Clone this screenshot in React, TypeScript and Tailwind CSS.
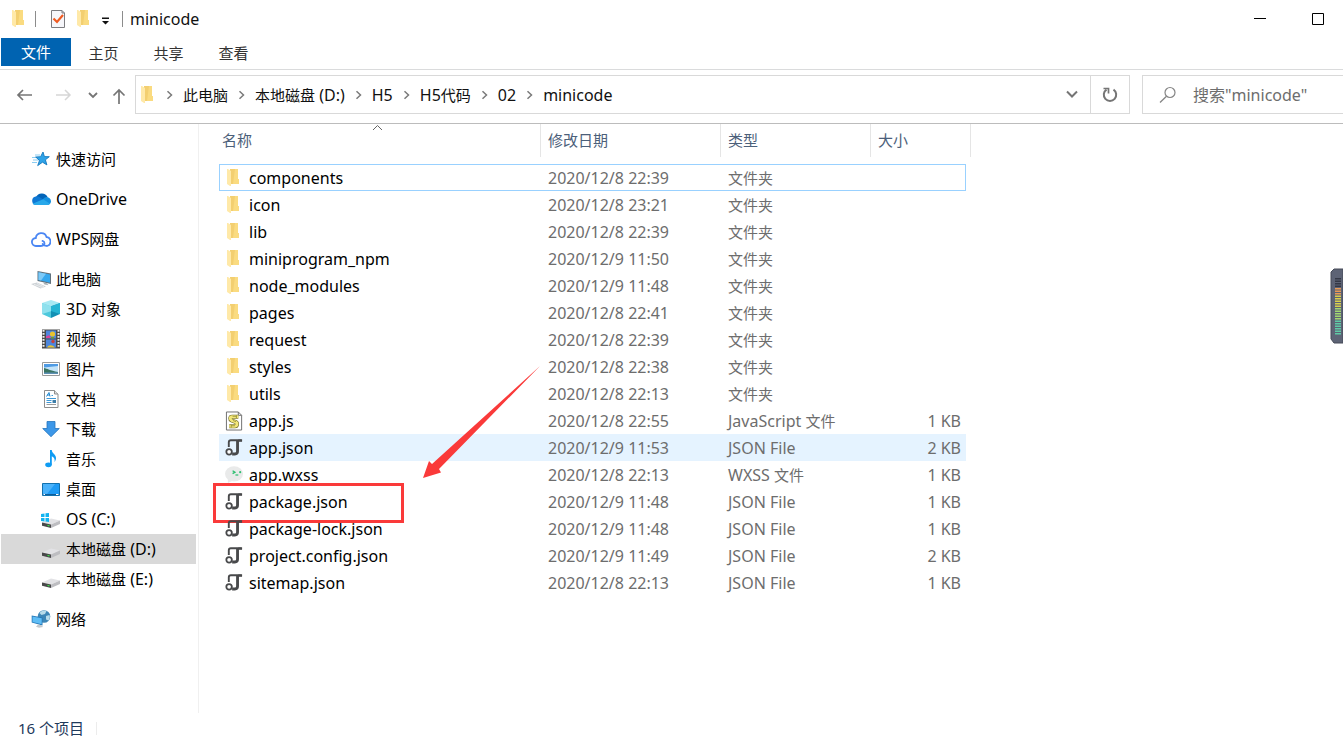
import type { ReactNode } from "react"

const tree = [
  { name: "快速访问", icon: "star", level: 0 },
  { name: "OneDrive", icon: "onedrive", level: 0 },
  { name: "WPS网盘", icon: "wps", level: 0 },
  { name: "此电脑", icon: "pc", level: 0 },
  { name: "3D 对象", icon: "cube", level: 1 },
  { name: "视频", icon: "video", level: 1 },
  { name: "图片", icon: "picture", level: 1 },
  { name: "文档", icon: "document", level: 1 },
  { name: "下载", icon: "download", level: 1 },
  { name: "音乐", icon: "music", level: 1 },
  { name: "桌面", icon: "desktop", level: 1 },
  { name: "OS (C:)", icon: "osdrive", level: 1 },
  { name: "本地磁盘 (D:)", icon: "drive", level: 1, selected: true },
  { name: "本地磁盘 (E:)", icon: "drive", level: 1 },
  { name: "网络", icon: "network", level: 0 },
]

const files = [
  { name: "components", date: "2020/12/8 22:39", type: "文件夹", size: "", icon: "folder", state: "focused" },
  { name: "icon", date: "2020/12/8 23:21", type: "文件夹", size: "", icon: "folder" },
  { name: "lib", date: "2020/12/8 22:39", type: "文件夹", size: "", icon: "folder" },
  { name: "miniprogram_npm", date: "2020/12/9 11:50", type: "文件夹", size: "", icon: "folder" },
  { name: "node_modules", date: "2020/12/9 11:48", type: "文件夹", size: "", icon: "folder" },
  { name: "pages", date: "2020/12/8 22:41", type: "文件夹", size: "", icon: "folder" },
  { name: "request", date: "2020/12/8 22:39", type: "文件夹", size: "", icon: "folder" },
  { name: "styles", date: "2020/12/8 22:38", type: "文件夹", size: "", icon: "folder" },
  { name: "utils", date: "2020/12/8 22:13", type: "文件夹", size: "", icon: "folder" },
  { name: "app.js", date: "2020/12/8 22:55", type: "JavaScript 文件", size: "1 KB", icon: "js" },
  { name: "app.json", date: "2020/12/9 11:53", type: "JSON File", size: "2 KB", icon: "json", state: "hover" },
  { name: "app.wxss", date: "2020/12/8 22:13", type: "WXSS 文件", size: "1 KB", icon: "wxss" },
  { name: "package.json", date: "2020/12/9 11:48", type: "JSON File", size: "1 KB", icon: "json", marked: true },
  { name: "package-lock.json", date: "2020/12/9 11:48", type: "JSON File", size: "1 KB", icon: "json" },
  { name: "project.config.json", date: "2020/12/9 11:49", type: "JSON File", size: "2 KB", icon: "json" },
  { name: "sitemap.json", date: "2020/12/8 22:13", type: "JSON File", size: "1 KB", icon: "json" },
]

const path = ["此电脑", "本地磁盘 (D:)", "H5", "H5代码", "02", "minicode"]

// Chinese runs are set one pixel smaller than the Latin text around them
function Label({ text }: { text: string }) {
  return (
    <span className="whitespace-pre">
      {text.split(/([\u4e00-\u9fff]+)/).map((part, i) =>
        i % 2 ? (
          <span key={i} className="text-[15px]">
            {part}
          </span>
        ) : (
          part
        ),
      )}
    </span>
  )
}

function FolderIcon() {
  return (
    <svg width="14" height="18" viewBox="0 0 14 18" aria-hidden="true">
      <path d="M4 0h8v10h1v5H4z" fill="#fadb80" />
      <path d="M4 0h5L7 15H4z" fill="#f3cf70" />
      <path d="M1 0h1l3 2v15H4L1 15z" fill="#ffe9a8" />
    </svg>
  )
}

const disk = (
  <>
    <path d="M1 13.500 10 9.500 19 11.500 10 15.500z" fill="#e2e2e5" />
    <path d="M10 15.500 19 11.500V15L10 19z" fill="#bdbdc1" />
    <path d="M1 13.500 10 15.500V19L1 16.800z" fill="#48484a" />
    <path d="M6.500 16.400l2 .5" stroke="#3ddc4a" strokeWidth="1.200" />
  </>
)

const treeIcons: Record<string, ReactNode> = {
  star: (
    <>
      <path d="M4 6h5M1 8.500h6M2 11h6M1 13.500h5" stroke="#8ccdf2" strokeWidth="1" />
      <path d="M12 3l1.400 4.600 4.900.1-3.900 3.100 1.500 5.100-4.400-2.700-4.800 3.400 1.800-5.200L4.700 8l4.900-.3z" fill="#2ea3e8" stroke="#1478bd" strokeWidth=".9" />
    </>
  ),
  onedrive: (
    <>
      <path d="M5 8.500A6.300 6.300 0 0 1 16.600 8L10 12z" fill="#0364b8" />
      <path d="M4.500 16A4.400 4.400 0 0 1 4.800 7.400c1.200-.2 2.500.1 3.500.7L14 11.500 7 16z" fill="#0f78d4" />
      <path d="M12 10.300C13 8.700 14.500 8 16.200 8c1.400.2 3.800 1.700 3.800 4.200 0 2.300-1.700 3.800-3.900 3.800H9z" fill="#1490df" />
      <path d="M1.600 14.800 12.200 10.200 19 14.800c-.8.9-1.800 1.200-2.900 1.200H4.500c-1.200 0-2.200-.4-2.900-1.200z" fill="#28a8ea" />
    </>
  ),
  wps: (
    <g fill="none" stroke="#4a86f3" strokeWidth="1.800" strokeLinecap="round">
      <path d="M9 17H5A4 4 0 0 1 4.800 9 5.500 5.500 0 0 1 15.500 8a4.600 4.600 0 0 1 .6 9c-2.300 0-3.400-.5-4.400-2" />
      <path d="M8.500 17c3 .2 5-1 5-2.800 0-1.400-.9-2-2-2.300" />
    </g>
  ),
  pc: (
    <>
      <path d="M6.500 2 20 4.500V15L6.500 12z" fill="#61717d" />
      <path d="M7.500 3.200 19 5.500v8.200L7.500 11z" fill="#35a7ee" />
      <path d="M7.500 3.200 15 4.700 10 11.500 7.500 11z" fill="#7cc9f7" />
      <path d="M12 13.500l4 .8 1.500 2-4-.8z" fill="#a8b0b6" />
      <path d="M0 15 6 13.500 15 17.500 9.500 19.500z" fill="#cdd2d6" />
      <path d="M3 15.300 11.500 18.500M6 14.500l7 3.300" stroke="#f4f5f6" strokeWidth=".7" />
    </>
  ),
  cube: (
    <>
      <path d="M1 4 10 1l9 3-9 3.200z" fill="#a7e9f3" />
      <path d="M1 4l9 3.200V19l-9-4z" fill="#4cc8dc" />
      <path d="M19 4l-9 3.200V19l9-4z" fill="#1390b4" />
      <path d="M1 4l9 3.200v5L1 15z" fill="#8fe1ee" />
      <path d="M19 4v11l-9-3V7.200z" fill="#24b4d3" />
    </>
  ),
  video: (
    <>
      <path d="M1 .5h18v19H1z" fill="#4a4a4a" />
      <path d="M2.500 1v18M17.500 1v18" stroke="#efefef" strokeWidth="2" strokeDasharray="1.800 1.200" />
      <path d="M5 1.500h10v8H5zM5 10.500h10v8H5z" fill="#4d86dc" />
      <circle cx="11.500" cy="5" r="2.600" fill="#e9c22e" />
      <path d="M5 7.500l3-1.500 2 3H5z" fill="#d9419c" />
      <path d="M10 8h3v1.500h-3z" fill="#6b9a35" />
      <circle cx="12" cy="12.500" r="1.700" fill="#c8413e" />
      <path d="M6 18.500c2-3 5-3 8 0z" fill="#e9c22e" />
    </>
  ),
  picture: (
    <>
      <path d="M1.500 3.500h17v13h-17z" fill="#fff" stroke="#9a9a9a" />
      <path d="M3 5h14v10H3z" fill="#c3e3f8" />
      <path d="M3 5h14v2L3 8.500z" fill="#4f9be4" />
      <path d="M3 9c3 .5 6 2.500 14 4V15H3z" fill="#3a7462" />
      <path d="M3 13.500h14V15H3z" fill="#5e90b5" />
    </>
  ),
  document: (
    <>
      <path d="M3.500 1.500h10l3.500 3.500v13.500H3.500z" fill="#fff" stroke="#8d8d8d" />
      <path d="M13.500 1.500V5H17" fill="#ddd" stroke="#8d8d8d" />
      <path d="M5.500 7.500 8 3.500l1 4M6 6h3" fill="none" stroke="#1e88d2" />
      <path d="M10.500 6.500H12M5.500 9.500h9.500M5.500 11.500h5M5.500 13.500h5" stroke="#3d97d6" />
      <path d="M5.500 15.500H15" stroke="#9a9a9a" />
      <path d="M11.500 11h3.500v3h-3.500z" fill="#3c7da8" />
    </>
  ),
  download: <path d="M6 2.500h8v7h4.300L10 17.700 1.700 9.500H6z" fill="#3c97e8" stroke="#2373bd" strokeWidth=".8" />,
  music: (
    <>
      <ellipse cx="7.500" cy="15.800" rx="3.300" ry="2.400" fill="#0f9cf3" />
      <path d="M9 1h1.800c0 3.500 4.700 4.500 4.200 8.500-.1 1.300-.7 2.500-1.500 3.500.6-3-.3-4.800-2.700-5.800v8.600H9z" fill="#0f9cf3" />
    </>
  ),
  desktop: (
    <>
      <path d="M1.500 4.500h17v12h-17z" fill="#1f9bf5" stroke="#1271ae" />
      <path d="M2 5h12L6 15H2z" fill="#4bb2fa" />
      <path d="M2 15.500h16" stroke="#0f5c98" />
      <path d="M2.500 15.500h1.500M15 15.500h2.500" stroke="#fff" />
    </>
  ),
  osdrive: (
    <>
      {disk}
      <path d="M0 5l3.500-.5v3.500H0zM4.500 4.300 8 4v4H4.500zM0 9h3.500v3.500L0 12zM4.500 9H8v4l-3.500-.4z" fill="#12b4f0" />
    </>
  ),
  drive: disk,
  network: (
    <>
      <circle cx="13" cy="7.500" r="6.300" fill="#3d86b6" />
      <path d="M8.500 4c1.500-2.500 4.500-3.200 7-2.100L14 5l-3.500 1zM15 7l3.500-1c.7 2 .3 4-1 5.500l-2.500-1z" fill="#b8dcea" />
      <path d="M.7 6.500 11.500 8.500v8L.7 13.500z" fill="#2578b8" />
      <path d="M1.500 7.500 10.700 9.300v6L1.500 12.900z" fill="#5fbdf5" />
      <path d="M7 15.500l3.500.8 1.500 1.700-4 .7-3-1z" fill="#c3c9cd" />
    </>
  ),
}

const fileIcons: Record<string, ReactNode> = {
  js: (
    <svg width="20" height="20" viewBox="0 0 20 20" aria-hidden="true">
      <path d="M1.500.5h12.500l3.500 3.500v15.500h-16z" fill="#fff" stroke="#6c6c6c" />
      <path d="M14 .5V4h3.500" fill="none" stroke="#6c6c6c" />
      <path d="M14 5.500H7.500c-2.500 0-2.500 3-.5 4l4 1.500c2.500 1 2 4.500-.5 4.500H4.500" fill="none" stroke="#6e6828" strokeWidth="4.200" />
      <path d="M14 5.500H7.500c-2.500 0-2.500 3-.5 4l4 1.500c2.500 1 2 4.500-.5 4.500H4.500" fill="none" stroke="#f2e779" strokeWidth="3" />
      <path d="M8 5h4M8.500 9.500l3 1.200M6.500 15h4M12 4v3M6.500 14v3" stroke="#8a822c" strokeWidth=".8" />
    </svg>
  ),
  json: (
    <svg width="20" height="20" viewBox="0 0 20 20" aria-hidden="true">
      <path d="M4 9V4c0-1.700.7-2.200 2.200-2.200H18" fill="none" stroke="#48494b" strokeWidth="2" />
      <path d="M13.200 2v11.500c0 2-.9 2.800-2.700 2.800H7.500" fill="none" stroke="#48494b" strokeWidth="3" />
      <path d="M14 1h2.500c1 0 1.500.8 1.500 2.500h-4z" fill="#48494b" />
      <circle cx="4.300" cy="14" r="2.900" fill="#fff" stroke="#48494b" strokeWidth="1.900" />
    </svg>
  ),
  wxss: (
    <svg width="20" height="20" viewBox="0 0 20 20" aria-hidden="true">
      <ellipse cx="9.500" cy="8.800" rx="9.500" ry="8" fill="#e9eaea" />
      <path d="M3 14v4.500l5-2.500z" fill="#e9eaea" />
      <path d="M8 5.500 10.500 7 8 8.500" fill="none" stroke="#2fbf71" strokeWidth="1.400" />
      <path d="M11 10h3" stroke="#2fbf71" strokeWidth="1.300" />
      <circle cx="16" cy="7" r="1.100" fill="#2fbf71" />
    </svg>
  ),
  folder: <FolderIcon />,
}

function TitleBar() {
  return (
    <header className="flex h-[38px] items-center pl-[11px] pr-[18px]">
      <FolderIcon />
      <span className="ml-[10px] h-4 w-px bg-[#8c8c8c]" />
      <button aria-label="属性" className="ml-[14px]">
        <svg width="16" height="20" viewBox="0 0 16 20">
          <path d="M1.500 1.500H12l2.500 2.500v14.500h-13z" fill="#f6f6fa" stroke="#7c7c80" />
          <path d="M12 1.500V4h2.500" fill="none" stroke="#7c7c80" />
          <path d="M3.500 9.500 7 13l6-7" fill="none" stroke="#ef5b22" strokeWidth="2.200" />
        </svg>
      </button>
      <button aria-label="新建文件夹" className="ml-[10px]">
        <FolderIcon />
      </button>
      <button aria-label="自定义快速访问工具栏" className="ml-[11px] pt-1">
        <svg width="9" height="8" viewBox="0 0 9 8">
          <path d="M1 .5h7v1.500H1zM1 4h7L4.500 7.500z" fill="#111" />
        </svg>
      </button>
      <span className="ml-3 h-4 w-px bg-[#8c8c8c]" />
      <h1 className="ml-[7px]">minicode</h1>
      <div className="ml-auto flex gap-11">
        <button aria-label="最小化">
          <svg width="14" height="14" viewBox="0 0 14 14">
            <path d="M1 6.500h12" stroke="#000" />
          </svg>
        </button>
        <button aria-label="最大化">
          <svg width="14" height="14" viewBox="0 0 14 14">
            <path d="M1.500 1.500h11v11h-11z" fill="none" stroke="#000" />
          </svg>
        </button>
      </div>
    </header>
  )
}

function Ribbon() {
  return (
    <div className="flex h-8 items-start border-b border-[#dadbdc] pl-px text-[15px] text-[#333]">
      <button className="h-7 w-[70px] bg-[#0063b1] text-white">文件</button>
      {["主页", "共享", "查看"].map((tab) => (
        <button key={tab} className="h-7 w-[65px] pt-[2px]">
          {tab}
        </button>
      ))}
    </div>
  )
}

function Chevron() {
  return (
    <svg className="w-[27px] shrink-0" height="10" viewBox="0 0 27 10" aria-hidden="true">
      <path d="M11.500 1.200 15.500 5l-4 3.800" fill="none" stroke="#7a7a7a" strokeWidth="1.500" />
    </svg>
  )
}

function AddressRow() {
  return (
    <div className="flex h-[54px] items-start border-b border-[#bcbcbc] pt-[5px]">
      <div className="flex h-[39px] w-[135px] shrink-0 items-center pl-4 text-[#757575]">
        <button aria-label="返回">
          <svg width="17" height="14" viewBox="0 0 17 14">
            <path d="M16 7H2M7 2 2 7l5 5" fill="none" stroke="currentColor" strokeWidth="1.700" />
          </svg>
        </button>
        <button aria-label="前进" className="ml-[22px] text-[#d6d6d6]">
          <svg width="17" height="14" viewBox="0 0 17 14">
            <path d="M1 7h14M10 2l5 5-5 5" fill="none" stroke="currentColor" strokeWidth="1.500" />
          </svg>
        </button>
        <button aria-label="最近浏览的位置" className="ml-4">
          <svg width="10" height="8" viewBox="0 0 10 8">
            <path d="M1 2l4 4 4-4" fill="none" stroke="currentColor" strokeWidth="1.800" />
          </svg>
        </button>
        <button aria-label="向上" className="ml-[14px] mt-1">
          <svg width="14" height="17" viewBox="0 0 14 17">
            <path d="M7 16V2M1.500 7.500 7 2l5.500 5.500" fill="none" stroke="currentColor" strokeWidth="1.700" />
          </svg>
        </button>
      </div>
      <div className="flex h-[39px] min-w-0 flex-1 border border-[#d9d9d9]">
        <nav aria-label="路径" className="flex min-w-0 flex-1 items-center pl-1">
          <FolderIcon />
          <span className="w-[2px]" />
          {path.map((name) => (
            <span key={name} className="flex items-center">
              <Chevron />
              <a href="#" className="text-[#111] leading-5">
                <Label text={name} />
              </a>
            </span>
          ))}
        </nav>
        <button aria-label="以前的位置" className="flex w-9 items-center justify-center">
          <svg width="12" height="9" viewBox="0 0 12 9">
            <path d="M1 1.500l5 5 5-5" fill="none" stroke="#757575" strokeWidth="2" />
          </svg>
        </button>
        <button aria-label="刷新" className="flex w-[39px] items-center justify-center border-l border-[#d9d9d9]">
          <svg width="16" height="16" viewBox="0 0 16 16">
            <path d="M11.500 2.600A6.200 6.200 0 1 1 4.500 2.600" fill="none" stroke="#757575" strokeWidth="2" />
            <path d="M1.500 1.500h5v5" fill="none" stroke="#757575" strokeWidth="1.700" />
          </svg>
        </button>
      </div>
      <label className="ml-3 flex h-[39px] w-[201px] shrink-0 items-center border border-r-0 border-[#d9d9d9] pl-4">
        <svg className="shrink-0" width="18" height="18" viewBox="0 0 18 18" aria-hidden="true">
          <circle cx="11" cy="6.500" r="5" fill="none" stroke="#858585" strokeWidth="1.200" />
          <path d="M7.500 10.200 1 16.500" stroke="#858585" strokeWidth="1.300" />
        </svg>
        <input
          type="search"
          aria-label="搜索"
          placeholder={'搜索"minicode"'}
          className="ml-4 w-full min-w-0 outline-none placeholder:text-[#6d6d6d]"
        />
      </label>
    </div>
  )
}

function Sidebar() {
  return (
    <nav aria-label="导航窗格" className="w-[199px] shrink-0 border-r border-[#f0f0f0] pl-px pr-[2px] pt-5">
      <ul>
        {tree.map((item, i) => (
          <li key={item.name} className={item.level === 0 && i > 0 ? "mt-[10px]" : ""}>
            <a
              href="#"
              className={`flex h-[30px] items-center gap-[5px] text-black ${item.level ? "pl-10" : "pl-[30px]"} ${
                item.selected ? "bg-[#d9d9d9]" : ""
              }`}
            >
              <svg className="shrink-0" width="20" height="20" viewBox="0 0 20 20" aria-hidden="true">
                {treeIcons[item.icon]}
              </svg>
              <Label text={item.name} />
            </a>
          </li>
        ))}
      </ul>
    </nav>
  )
}

function HeaderCell({ text, className }: { text: string; className: string }) {
  return (
    <th scope="col" className="h-10 p-0 text-left align-top font-normal">
      <div className={`relative flex h-[33px] items-center border-r border-[#e5e5e5] text-[15px] text-[#4c607a] ${className}`}>
        {text}
        {text === "名称" && (
          <svg className="absolute left-[153px] top-0" width="11" height="7" viewBox="0 0 11 7" aria-hidden="true">
            <path d="M1 6l4.500-4.500L10 6" fill="none" stroke="#666" />
          </svg>
        )}
      </div>
    </th>
  )
}

// Red frame and arrow pointing out one file
function Marker() {
  return (
    <>
      <span className="absolute -left-[6px] -top-[5px] h-10 w-[191px] border-3 border-[#fa3a3a]" />
      <svg className="absolute left-[203px] -top-[123px]" width="120" height="114" viewBox="0 0 120 114" aria-hidden="true">
        <path d="M1 113 7 96l3 3L118 1 17 104l2 3.500z" fill="#fa3a3a" />
      </svg>
    </>
  )
}

function FileList() {
  return (
    <main className="min-w-0 flex-1 pl-5">
      <table className="w-[752px] table-fixed border-separate border-spacing-0">
        <colgroup>
          <col className="w-[322px]" />
          <col className="w-[180px]" />
          <col className="w-[150px]" />
          <col className="w-[95px]" />
          <col className="w-[5px]" />
        </colgroup>
        <thead>
          <tr>
            <HeaderCell text="名称" className="pl-[3px]" />
            <HeaderCell text="修改日期" className="pl-[7px]" />
            <HeaderCell text="类型" className="pl-[7px]" />
            <HeaderCell text="大小" className="border-r-0 pl-[7px]" />
            <HeaderCell text="" className="" />
          </tr>
        </thead>
        <tbody>
          {files.map((file) => {
            const focused = file.state === "focused"
            const cell = `h-[27px] p-0 leading-6 ${file.state === "hover" ? "bg-[#e5f3ff]" : ""} ${
              focused ? "border-y border-[#99d1ff]" : ""
            }`
            return (
              <tr key={file.name} className="text-[#6d6d6d]">
                <td className={`${cell} relative ${focused ? "border-l" : ""}`}>
                  <div className={`flex items-center text-black ${focused ? "pl-1" : "pl-[5px]"}`}>
                    <span className="mr-[5px] flex w-5 shrink-0 pl-px">
                      {file.icon === "folder" ? <span className="pl-px">{fileIcons.folder}</span> : fileIcons[file.icon]}
                    </span>
                    {file.name}
                  </div>
                  {file.marked && <Marker />}
                </td>
                <td className={`${cell} pl-[7px]`}>{file.date}</td>
                <td className={`${cell} pl-[7px]`}>
                  <Label text={file.type} />
                </td>
                <td className={`${cell} pr-[5px] text-right ${focused ? "border-r" : ""}`}>{file.size}</td>
                <td className="p-0" />
              </tr>
            )
          })}
        </tbody>
      </table>
    </main>
  )
}

// Level meter docked to the right edge of the screen
function LevelMeter() {
  return (
    <svg className="fixed right-0 top-[268px]" width="13" height="76" viewBox="0 0 13 76" aria-hidden="true">
      <path d="M13 1H4L1 4v67l3 4h9z" fill="#5d6375" stroke="#464b58" />
      {Array.from({ length: 23 }, (_, i) => (
        <rect
          key={i}
          x="5"
          y={10 + i * 2.5}
          width="6"
          height="1.500"
          fill={i < 4 ? "#343846" : i < 7 ? "#e89a55" : i < 12 ? "#d9cf4c" : i < 17 ? "#a3d670" : "#5fc9a6"}
        />
      ))}
    </svg>
  )
}

export default function App() {
  return (
    <div className="flex min-h-screen flex-col overflow-x-hidden bg-white font-['Noto_Sans','Noto_Sans_CJK_SC',sans-serif] text-base text-[#111]">
      <TitleBar />
      <Ribbon />
      <AddressRow />
      <div className="flex flex-1">
        <Sidebar />
        <FileList />
      </div>
      <footer className="flex h-[31px] items-center pl-[18px] text-[15px] text-[#1e395b]">
        <span>16 个项目</span>
        <span className="ml-3 h-[13px] w-px bg-[#ececec]" />
      </footer>
      <LevelMeter />
    </div>
  )
}
